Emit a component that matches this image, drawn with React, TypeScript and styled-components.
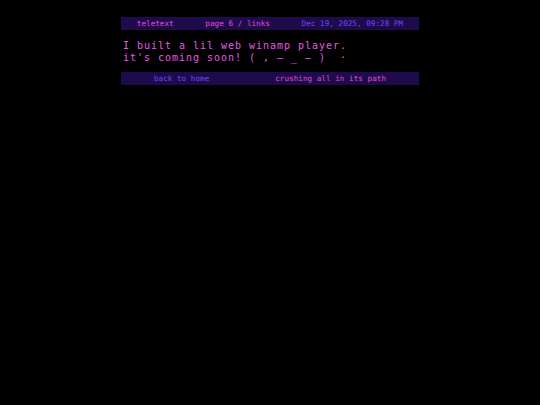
import React from 'react';
import styled, { createGlobalStyle } from 'styled-components';

const GlobalStyle = createGlobalStyle`
  html, body {
    margin: 0;
    padding: 0;
    background: #000;
  }
  body {
    font-family: "DejaVu Sans Mono", "Liberation Mono", monospace;
  }
`;

const Page = styled.div`
  width: 298px;
  margin: 0 auto;
  padding-top: 17px;
  display: flex;
  flex-direction: column;
`;

const Bar = styled.div`
  height: 13px;
  background: #1e0b4b;
  display: flex;
  align-items: center;
  justify-content: space-around;
  font-size: 7.6px;
  letter-spacing: 0.05px;
`;

const BarItem = styled.span<{ tone?: 'pink' | 'violet' }>`
  color: ${({ tone }) => (tone === 'violet' ? '#7048f2' : '#e04ad8')};
  white-space: pre;
`;

const Message = styled.div`
  box-sizing: border-box;
  padding: 10px 2px 0;
  height: 42px;
  color: #e35ae0;
  font-size: 10px;
  line-height: 11.7px;
  letter-spacing: 0.98px;
  white-space: pre;
`;

const Line = styled.div``;

const App = () => {
  return (
    <>
      <GlobalStyle />
      <Page>
        <Bar>
          <BarItem>teletext</BarItem>
          <BarItem>page 6 / links</BarItem>
          <BarItem tone="violet">Dec 19, 2025, 09:28 PM</BarItem>
        </Bar>
        <Message>
          <Line>I built a lil web winamp player.</Line>
          <Line>it's coming soon! ( , — _ — )  ·</Line>
        </Message>
        <Bar>
          <BarItem tone="violet">back to home</BarItem>
          <BarItem>crushing all in its path</BarItem>
        </Bar>
      </Page>
    </>
  );
};

export default App;
